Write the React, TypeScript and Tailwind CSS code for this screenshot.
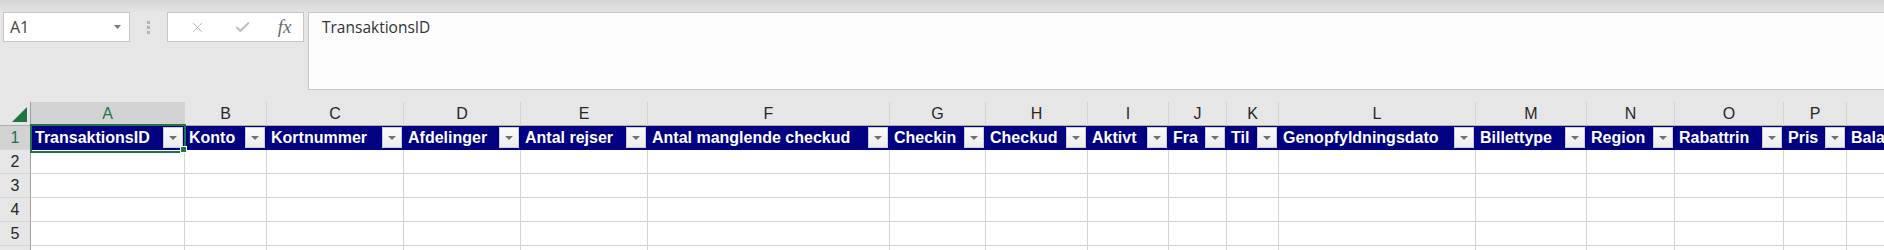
import { X, Check } from "lucide-react";

type Col = { letter: string; width: number; title: string };

const columns: Col[] = [
  { letter: "A", width: 154, title: "TransaktionsID" },
  { letter: "B", width: 82, title: "Konto" },
  { letter: "C", width: 137, title: "Kortnummer" },
  { letter: "D", width: 117, title: "Afdelinger" },
  { letter: "E", width: 127, title: "Antal rejser" },
  { letter: "F", width: 242, title: "Antal manglende checkud" },
  { letter: "G", width: 96, title: "Checkin" },
  { letter: "H", width: 102, title: "Checkud" },
  { letter: "I", width: 81, title: "Aktivt" },
  { letter: "J", width: 58, title: "Fra" },
  { letter: "K", width: 52, title: "Til" },
  { letter: "L", width: 197, title: "Genopfyldningsdato" },
  { letter: "M", width: 111, title: "Billettype" },
  { letter: "N", width: 88, title: "Region" },
  { letter: "O", width: 109, title: "Rabattrin" },
  { letter: "P", width: 63, title: "Pris" },
  { letter: "Q", width: 140, title: "Balance" },
];

// row 6 only peeks in at the bottom edge, so it gets no number
const bodyRows = ["2", "3", "4", "5", ""];

function FilterButton() {
  return (
    <div className="mr-[1px] mt-[1px] flex h-[21px] w-[20px] shrink-0 items-center justify-center border border-[#cdcdcd] bg-gradient-to-b from-[#fbfbfb] to-[#ececec]">
      <svg width="8" height="4" viewBox="0 0 8 4">
        <polygon points="0,0 8,0 4,4" fill="#707070" />
      </svg>
    </div>
  );
}

function FormulaBar() {
  return (
    <div className="font-['Open_Sans',sans-serif]">
      <div className="h-[12px] bg-gradient-to-b from-[#d6d6d6] to-[#e3e3e3]" />
      <div className="flex h-[90px] items-start pl-[3px]">
        <div className="flex h-[30px] w-[127px] items-center justify-between border border-[#c6c6c6] bg-white pl-[6px] pr-[8px] text-[16px] text-[#444]">
          <span>A1</span>
          <svg width="7" height="4" viewBox="0 0 7 4">
            <polygon points="0,0 7,0 3.5,4" fill="#777" />
          </svg>
        </div>
        <div className="flex h-[30px] w-[37px] flex-col items-center justify-center gap-[2px]">
          <div className="h-[3px] w-[3px] bg-[#b4b4b4]" />
          <div className="h-[3px] w-[3px] bg-[#b4b4b4]" />
          <div className="h-[3px] w-[3px] bg-[#b4b4b4]" />
        </div>
        <div className="flex h-[30px] w-[137px] items-center border border-[#c6c6c6] bg-white">
          <div className="flex w-[46px] justify-center pl-[12px]">
            <X className="h-[17px] w-[17px] text-[#bdbdbd]" strokeWidth={1.4} />
          </div>
          <div className="flex w-[46px] justify-center pl-[10px]">
            <Check className="h-[17px] w-[17px] text-[#bdbdbd]" strokeWidth={2.8} />
          </div>
          <div className="flex w-[43px] justify-center pl-[6px] font-['Liberation_Serif',serif] text-[19px] italic text-[#6a6a6a]">
            fx
          </div>
        </div>
        <div className="-mr-[4px] ml-[4px] h-[78px] flex-1 border border-[#c6c6c6] bg-[#fdfdfd] px-[13px] pt-[4px] text-[15.5px] leading-[20px] text-[#333]">
          TransaktionsID
        </div>
      </div>
    </div>
  );
}

function Grid() {
  return (
    <div className="relative">
      {/* column letters */}
      <div className="flex h-[24px] font-['Liberation_Sans',sans-serif] text-[16px] text-[#262626]">
        <div className="flex h-[24px] w-[31px] shrink-0 items-end justify-end border-b border-r border-b-[#ababab] border-r-[#9f9f9f] bg-[#e6e6e6] pb-[3px] pr-[3px]">
          <svg width="15" height="15" viewBox="0 0 15 15">
            <polygon points="15,0 15,15 0,15" fill="#217346" />
          </svg>
        </div>
        {columns.map((c, i) => (
          <div
            key={c.letter}
            style={{ width: c.width }}
            className={`flex h-[24px] shrink-0 items-center justify-center border-b border-r border-b-[#ababab] border-r-[#d4d4d4] leading-[23px] ${
              i === 0 ? "bg-[#d2d2d2] text-[#217346]" : "bg-[#e6e6e6]"
            }`}
          >
            {c.letter}
          </div>
        ))}
      </div>

      {/* row 1: table header */}
      <div className="flex h-[24px]">
        <div className="flex h-[24px] w-[31px] shrink-0 items-center justify-center border-b border-r border-b-[#d4d4d4] border-r-[#9f9f9f] bg-[#d2d2d2] font-['Liberation_Sans',sans-serif] text-[16px] text-[#217346]">
          1
        </div>
        {columns.map((c) => (
          <div
            key={c.letter}
            style={{ width: c.width }}
            className="flex h-[24px] shrink-0 items-start justify-between overflow-hidden border-r border-[#000080] bg-[#000080]"
          >
            <span className="whitespace-nowrap pl-[4px] font-['Liberation_Sans',sans-serif] text-[16px] font-bold leading-[23px] text-white">
              {c.title}
            </span>
            <FilterButton />
          </div>
        ))}
      </div>

      {/* empty rows */}
      {bodyRows.map((r, idx) => (
        <div key={idx} className="flex h-[24px]">
          <div className="flex h-[24px] w-[31px] shrink-0 items-center justify-center border-b border-r border-b-[#d4d4d4] border-r-[#9f9f9f] bg-[#e6e6e6] font-['Liberation_Sans',sans-serif] text-[16px] text-[#262626]">
            {r}
          </div>
          {columns.map((c) => (
            <div
              key={c.letter}
              style={{ width: c.width }}
              className="h-[24px] shrink-0 border-b border-r border-[#d4d4d4] bg-white"
            />
          ))}
        </div>
      ))}

      {/* active cell selection */}
      <div className="pointer-events-none absolute left-[30px] top-[22px] h-[29px] w-[156px] border-2 border-[#217346]" />
      <div className="pointer-events-none absolute left-[180px] top-[44px] h-[7px] w-[7px] border border-white bg-[#217346]" />
    </div>
  );
}

export default function App() {
  return (
    <div className="h-[250px] w-full overflow-hidden bg-[#e6e6e6]">
      <FormulaBar />
      <Grid />
    </div>
  );
}
